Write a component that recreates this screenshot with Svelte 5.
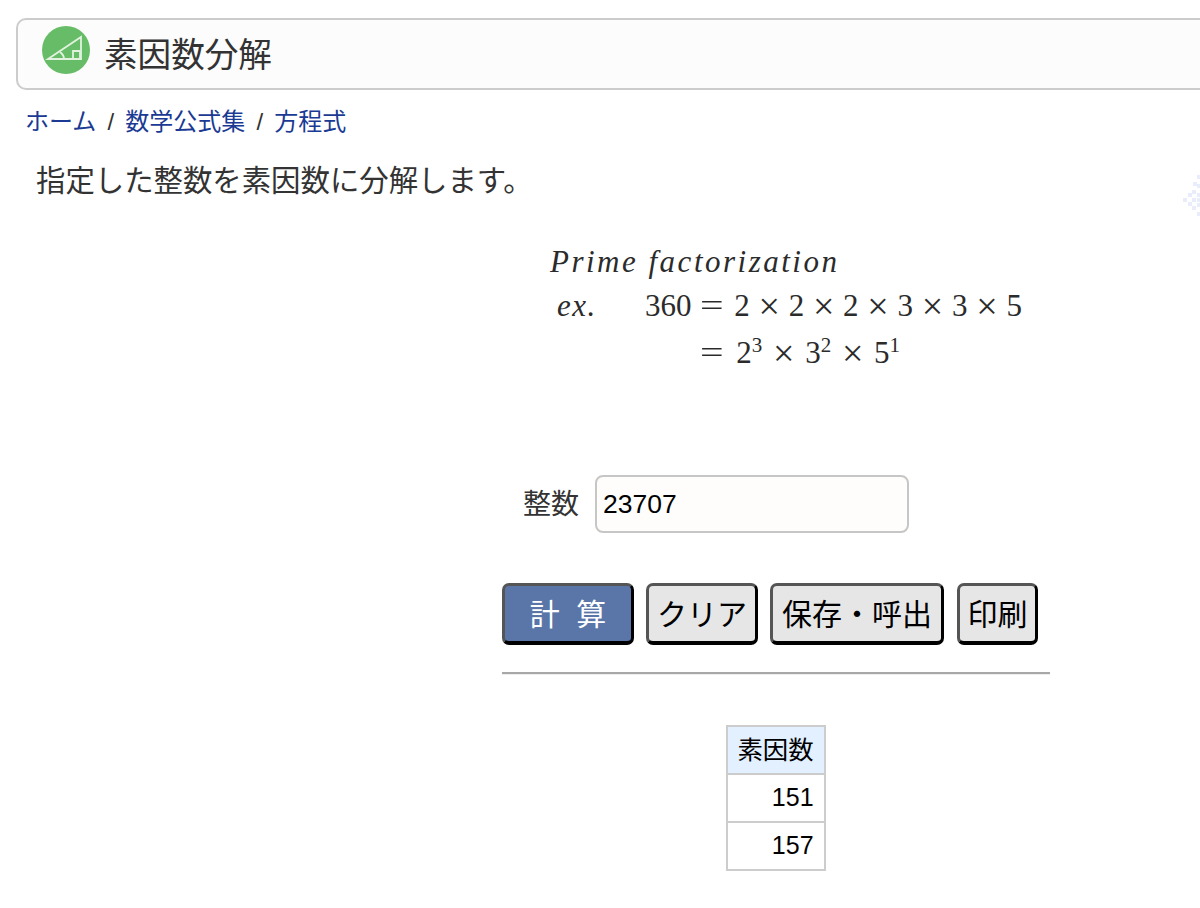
<script>
  let value = $state("23707");
  const factors = [151, 157];
  const dots = [[21,8],[17,15],[21,17],[16,23],[21,26],[12,26],[7,31],[16,31],[21,31],[12,35],[21,36],[16,39],[21,45]];
</script>

<svg class="deco" width="24" height="52" viewBox="0 0 24 52" aria-hidden="true">
  <g fill="#e9ecfa">
    {#each dots as [x, y]}
      <rect {x} {y} width="4" height="4" />
    {/each}
  </g>
</svg>

<div class="page">
  <header class="title-bar">
    <svg class="logo" width="48" height="48" viewBox="0 0 48 48" aria-hidden="true">
      <circle cx="24" cy="24" r="24" fill="#67bd67" />
      <g fill="none" stroke="#e2f2df" stroke-width="1.8">
        <path d="M6 33 L39 11 V33 Z" />
        <path d="M31 25 H38 V33 H31 Z" />
        <path d="M18 26 Q22 29 22 33" />
      </g>
    </svg>
    <h1>素因数分解</h1>
  </header>

  <nav class="crumbs">
    <a href="#home">ホーム</a> / <a href="#formula">数学公式集</a> / <a href="#equation">方程式</a>
  </nav>

  <p class="lead">指定した整数を素因数に分解します。</p>

  <div class="math">
    <div class="math-title">Prime factorization</div>
    <div class="math-grid">
      <span class="ex">ex.</span>
      <span>360</span>
      <span class="rhs"><span class="eq">=</span> 2 <i>×</i> 2 <i>×</i> 2 <i>×</i> 3 <i>×</i> 3 <i>×</i> 5</span>
      <span></span>
      <span></span>
      <span class="rhs powers"><span class="eq">=</span> 2<sup>3</sup> <i>×</i> 3<sup>2</sup> <i>×</i> 5<sup>1</sup></span>
    </div>
  </div>

  <section class="calc">
    <div class="field">
      <label for="num">整数</label>
      <input id="num" type="text" bind:value />
    </div>

    <div class="buttons">
      <button class="primary">計&nbsp;&nbsp;算</button>
      <button>クリア</button>
      <button class="save">保存・呼出</button>
      <button class="print">印刷</button>
    </div>

    <hr />

    <table>
      <thead>
        <tr><th>素因数</th></tr>
      </thead>
      <tbody>
        {#each factors as f}
          <tr><td>{f}</td></tr>
        {/each}
      </tbody>
    </table>
  </section>
</div>

<style>
  :global(body) {
    background: #fff;
    overflow: hidden;
  }

  .page {
    height: 908px;
    overflow: hidden;
    font-family: "Liberation Sans", "Noto Sans CJK JP", sans-serif;
    color: #333;
  }

  .deco {
    position: absolute;
    top: 167px;
    right: 0;
    filter: blur(0.6px);
  }

  .title-bar {
    display: flex;
    align-items: center;
    gap: 14px;
    height: 68px;
    margin: 18px -20px 0 16px;
    padding-left: 24px;
    border: 2px solid #ccc;
    border-radius: 10px;
    background: #fcfcfc;
  }

  .logo {
    margin-bottom: 8px;
  }

  h1 {
    margin: 0 0 4px;
    font-size: 33.6px;
    font-weight: 400;
    color: #333;
  }

  .crumbs {
    margin: 15px 0 0 25px;
    font-size: 24px;
    line-height: 34px;
    word-spacing: 4.5px;
  }

  .crumbs a {
    color: #1a3a94;
    text-decoration: none;
  }

  .lead {
    margin: 20px 0 0 36px;
    font-size: 29.4px;
    line-height: 44px;
  }

  .math {
    margin: 37px 0 0 550px;
    font-family: "Liberation Serif", serif;
    font-size: 31px;
    line-height: 44px;
    color: #2b2b2b;
  }

  .math-title {
    font-style: italic;
    letter-spacing: 2.5px;
  }

  .math-grid {
    display: grid;
    grid-template-columns: 95px 49px auto;
    grid-template-rows: 44px 46px;
    justify-content: start;
  }

  .ex {
    padding-left: 7px;
    font-style: italic;
    letter-spacing: 1.5px;
  }

  .rhs {
    padding-left: 6px;
    word-spacing: 1px;
  }

  .rhs i {
    font-style: normal;
    font-size: 38px;
    line-height: 0;
    vertical-align: -3px;
  }

  .powers {
    word-spacing: 3px;
    padding-top: 3px;
  }

  .eq {
    display: inline-block;
    margin-right: 8px;
    transform: scaleX(1.35);
    transform-origin: left;
  }

  .rhs sup {
    font-size: 21px;
    line-height: 0;
  }

  .calc {
    width: 548px;
    margin: 101px 0 0 502px;
  }

  .field {
    display: flex;
    align-items: center;
    gap: 16px;
    padding-left: 21px;
    font-size: 28px;
  }

  label {
    padding-bottom: 4px;
  }

  input {
    box-sizing: border-box;
    width: 314px;
    height: 58px;
    padding: 0 6px;
    border: 2px solid #c6c6c6;
    border-radius: 8px;
    background: #fffdfb;
    font: 26.5px "Liberation Sans", sans-serif;
    color: #000;
  }

  .buttons {
    display: flex;
    gap: 12px;
    margin-top: 50px;
  }

  button {
    box-sizing: border-box;
    height: 62px;
    padding: 0 8px 3px;
    border-style: solid;
    border-width: 3px 3px 4px 3px;
    border-color: #555 #000 #000 #555;
    border-radius: 7px;
    background: #e6e6e6;
    font-family: "Liberation Sans", "Noto Sans CJK JP", sans-serif;
    font-size: 30px;
    color: #000;
  }

  .primary {
    width: 132px;
    background: #5a76a8;
    color: #fff;
  }

  .save {
    padding: 0 9px 3px;
  }

  .print {
    margin-left: 1px;
    padding: 0 7.5px 3px;
  }

  hr {
    height: 0;
    margin: 27px 0 0;
    border: 0;
    border-top: 2px solid #a8a8a8;
    border-bottom: 1px solid #eee;
  }

  table {
    margin: 50px auto 0;
    border-collapse: collapse;
    font-size: 25.4px;
    color: #000;
  }

  th, td {
    box-sizing: border-box;
    height: 48px;
    padding: 0 10px 2px 9px;
    border: 2px solid #ccc;
    font-weight: 400;
  }

  th {
    padding-bottom: 5px;
    background: #e3f0ff;
  }

  td {
    text-align: right;
    font-size: 25px;
  }
</style>
